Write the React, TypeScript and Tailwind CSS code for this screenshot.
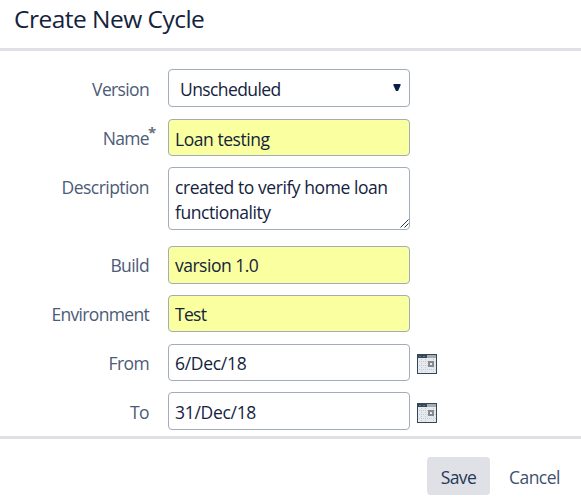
import type { ReactNode } from "react";

function Row({ label, tracking, className, labelPad = "pt-[8px]", required, children }: {
  label: string;
  tracking: string;
  className: string;
  labelPad?: string;
  required?: boolean;
  children: ReactNode;
}) {
  return (
    <div className={`flex items-start ${className}`}>
      <label className={`relative mr-[19px] w-[149px] shrink-0 whitespace-nowrap text-right leading-6 text-[#4c5b76] ${labelPad}`}>
        <span className={tracking}>{label}</span>
        {required && <span className="absolute left-[148px] top-[3px] text-[15px] font-bold leading-5 text-[#6b7078]">*</span>}
      </label>
      {children}
    </div>
  );
}

const field = "w-[242px] shrink-0 rounded-[4px] border border-[#a3adb9] px-[6px] leading-[25px] text-[#14233d] outline-none whitespace-nowrap";

function CalendarIcon({ className }: { className: string }) {
  return (
    <svg className={`ml-[7px] shrink-0 ${className}`} width="20" height="20" viewBox="0 0 20 20" shapeRendering="crispEdges">
      <rect width="20" height="20" fill="#34465a" />
      <rect x="1" y="4" width="18" height="15" fill="#e6e9ed" />
      <rect x="10" y="1" width="9" height="3" fill="#a6abb1" />
      <path d="M2 2.5h2M6 2.5h2" stroke="#60758a" />
      <path d="M2 7.5h17M2 11.5h17M2 15.5h17M4.5 5v14M8.5 5v14M16.5 5v14" stroke="#c3cbd3" strokeDasharray="1 1" />
      <path d="M11 7h6v6h-6zM13 9v2h2V9z" fill="#85888e" fillRule="evenodd" />
    </svg>
  );
}

export default function App() {
  return (
    <main className="flex h-[502px] w-[581px] flex-col overflow-hidden bg-white font-['Open_Sans',sans-serif] text-[17.5px]">
      <header className="h-[51px] shrink-0 border-b-[3px] border-[#dfe1e6] pl-[14px] pt-[3px]">
        <h1 className="whitespace-nowrap text-[24.5px] leading-8 tracking-[-0.52px] text-[#14233d]">Create New Cycle</h1>
      </header>
      <form className="flex h-[385px] shrink-0 flex-col pt-[18px]">
        <Row label="Version" tracking="tracking-[-0.65px]" className="h-[50px]">
          <div className={`${field} flex h-[38px] items-center justify-between bg-white pl-[11px] pt-[2px] pr-[8px]`}>
            <span className="tracking-[-0.6px]">Unscheduled</span>
            <svg className="-mt-[3px]" width="8" height="8" viewBox="0 0 8 8"><path d="M.5 0h7v1.5L5 7H3L.5 1.5z" fill="#091e42" /></svg>
          </div>
        </Row>
        <Row label="Name" tracking="tracking-[-0.7px]" className="h-12" labelPad="pt-[7px]" required>
          <input className={`${field} h-[37px] bg-[#faff9f] pt-[2px] tracking-[-0.45px]`} defaultValue="Loan testing" />
        </Row>
        <Row label="Description" tracking="tracking-[-0.55px]" className="h-[79px]">
          <div className="relative">
            <textarea className={`${field} block h-[63px] resize-none overflow-hidden bg-white pt-[7px] tracking-[-0.43px]`} defaultValue={"created to verify home loan\nfunctionality"} />
            <svg className="absolute bottom-[2px] right-[1px]" width="9" height="9" viewBox="0 0 9 9"><path d="M.5 8.5 8.5.5M4.5 8.5l4-4" stroke="#253858" /></svg>
          </div>
        </Row>
        <Row label="Build" tracking="tracking-[-0.6px]" className="h-[49px]" labelPad="pt-[7px]">
          <input className={`${field} h-[38px] bg-[#faff9f] pb-px tracking-[-0.5px]`} defaultValue="varsion 1.0" />
        </Row>
        <Row label="Environment" tracking="tracking-[-0.68px]" className="h-[49px]" labelPad="pt-[7px]">
          <input className={`${field} h-[37px] bg-[#faff9f] tracking-[-0.7px]`} defaultValue="Test" />
        </Row>
        <Row label="From" tracking="tracking-[-0.6px]" className="h-12" labelPad="pt-[7px]">
          <input className={`${field} h-[37px] bg-white tracking-[-0.3px]`} defaultValue="6/Dec/18" />
          <CalendarIcon className="mt-[10px]" />
        </Row>
        <Row label="To" tracking="tracking-[-0.6px]" className="h-[38px]">
          <input className={`${field} h-[38px] bg-white pt-[2px] tracking-[-0.3px]`} defaultValue="31/Dec/18" />
          <CalendarIcon className="mt-[11px]" />
        </Row>
      </form>
      <footer className="flex h-[66px] shrink-0 border-t-[3px] border-[#dfe1e6] pl-[427px] pt-[18px]">
        <button className="h-[38px] w-[63px] rounded-[4px] bg-[#dfe1e6] pt-[2px] leading-6 tracking-[-0.6px] text-[#253858]">Save</button>
        <button className="ml-[19px] h-[38px] whitespace-nowrap pt-[2px] leading-6 tracking-[-0.55px] text-[#42526e]">Cancel</button>
      </footer>
    </main>
  );
}
